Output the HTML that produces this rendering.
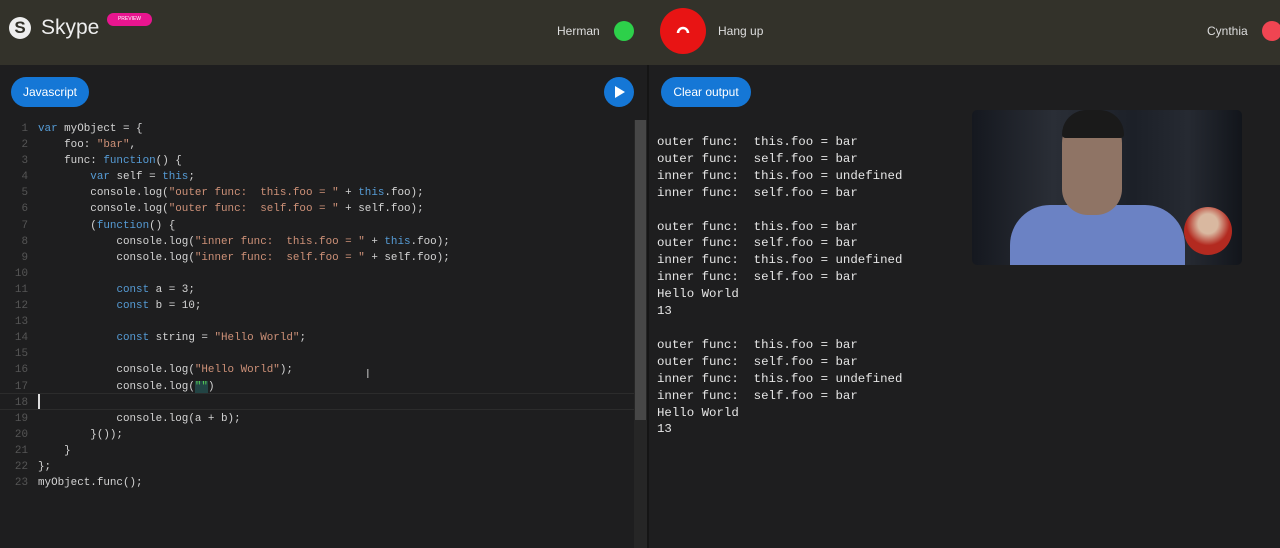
<!DOCTYPE html>
<html><head><style>
*{margin:0;padding:0;box-sizing:border-box}
body{width:1280px;height:548px;background:#1e1e1f;font-family:"Liberation Sans",sans-serif;position:relative;overflow:hidden;color:#ddd}
.hdr{position:absolute;left:0;top:0;width:1280px;height:65px;background:#33322a}
.abs{position:absolute}
.btn{position:absolute;background:#1577d6;color:#fff;border-radius:16px;font-size:12px;text-align:center;line-height:30px;height:30px}
.code{position:absolute;left:0;top:121px;font-family:"Liberation Mono",monospace;font-size:10.9px;line-height:16.1px;white-space:pre;color:#d4d4d4}
.ln{display:inline-block;width:38px;text-align:right;color:#555;padding-right:10px}
.k{color:#569cd6}.s{color:#ce9178}
.out{position:absolute;left:657px;top:134px;font-family:"Liberation Mono",monospace;font-size:12.4px;line-height:16.9px;white-space:pre;color:#e6e6e6}
</style></head><body>
<div class="hdr"></div>
<div class="abs" style="left:9px;top:17px;width:22px;height:22px;border-radius:50%;background:#eee;color:#33322a;font-weight:bold;font-size:17px;text-align:center;line-height:22px">S</div>
<div class="abs" style="left:41px;top:16px;font-size:21px;color:#eee">Skype</div>
<div class="abs" style="left:107px;top:13px;width:45px;height:13px;border-radius:7px;background:#e8158f;color:#fff;font-size:5px;text-align:center;line-height:13px">PREVIEW</div>
<div class="abs" style="left:557px;top:24px;font-size:12px;color:#ddd">Herman</div>
<div class="abs" style="left:614px;top:21px;width:20px;height:20px;border-radius:50%;background:#2dd04a"></div>
<div class="abs" style="left:660px;top:8px;width:46px;height:46px;border-radius:50%;background:#e81414"></div>
<svg class="abs" style="left:676px;top:24px" width="14" height="10"><path d="M2 9 A5 5 0 0 1 12 9" stroke="#fff" stroke-width="2.5" fill="none"/></svg>
<div class="abs" style="left:718px;top:24px;font-size:12px;color:#ddd">Hang up</div>
<div class="abs" style="left:1207px;top:24px;font-size:12px;color:#ddd">Cynthia</div>
<div class="abs" style="left:1262px;top:21px;width:20px;height:20px;border-radius:50%;background:#f04552"></div>

<div class="btn" style="left:11px;top:77px;width:78px">Javascript</div>
<div class="abs" style="left:604px;top:77px;width:30px;height:30px;border-radius:50%;background:#1577d6"></div>
<svg class="abs" style="left:613px;top:85px" width="14" height="14"><path d="M2 1 L12 7 L2 13Z" fill="#fff"/></svg>
<div class="btn" style="left:661px;top:77px;width:90px">Clear output</div>

<div class="abs" style="left:634px;top:120px;width:13px;height:428px;background:#262626"></div>
<div class="abs" style="left:635px;top:120px;width:11px;height:300px;background:#474747"></div>
<div class="abs" style="left:647px;top:65px;width:2px;height:483px;background:#151515"></div>
<div class="abs" style="left:0;top:393px;width:634px;height:17px;border-top:1px solid #2c2c2c;border-bottom:1px solid #2c2c2c"></div>
<div class="abs" style="left:38px;top:394px;width:2px;height:15px;background:#ddd"></div>

<div class="code"><span class="ln">1</span><span class="k">var</span> myObject = {
<span class="ln">2</span>    foo: <span class="s">"bar"</span>,
<span class="ln">3</span>    func: <span class="k">function</span>() {
<span class="ln">4</span>        <span class="k">var</span> self = <span class="k">this</span>;
<span class="ln">5</span>        console.log(<span class="s">"outer func:  this.foo = "</span> + <span class="k">this</span>.foo);
<span class="ln">6</span>        console.log(<span class="s">"outer func:  self.foo = "</span> + self.foo);
<span class="ln">7</span>        (<span class="k">function</span>() {
<span class="ln">8</span>            console.log(<span class="s">"inner func:  this.foo = "</span> + <span class="k">this</span>.foo);
<span class="ln">9</span>            console.log(<span class="s">"inner func:  self.foo = "</span> + self.foo);
<span class="ln">10</span>
<span class="ln">11</span>            <span class="k">const</span> a = 3;
<span class="ln">12</span>            <span class="k">const</span> b = 10;
<span class="ln">13</span>
<span class="ln">14</span>            <span class="k">const</span> string = <span class="s">"Hello World"</span>;
<span class="ln">15</span>
<span class="ln">16</span>            console.log(<span class="s">"Hello World"</span>);
<span class="ln">17</span>            console.log(<span style="color:#5c5;background:#244">""</span>)
<span class="ln">18</span>
<span class="ln">19</span>            console.log(a + b);
<span class="ln">20</span>        }());
<span class="ln">21</span>    }
<span class="ln">22</span>};
<span class="ln">23</span>myObject.func();</div>
<div class="abs" style="left:366px;top:366px;color:#aaa;font-size:13px">I</div>

<div class="out">outer func:  this.foo = bar
outer func:  self.foo = bar
inner func:  this.foo = undefined
inner func:  self.foo = bar

outer func:  this.foo = bar
outer func:  self.foo = bar
inner func:  this.foo = undefined
inner func:  self.foo = bar
Hello World
13

outer func:  this.foo = bar
outer func:  self.foo = bar
inner func:  this.foo = undefined
inner func:  self.foo = bar
Hello World
13</div>

<div class="abs" style="left:972px;top:110px;width:270px;height:155px;border-radius:5px;background:linear-gradient(90deg,#15181f,#2a2e36 30%,#1c2028 60%,#262a32 80%,#12151b);overflow:hidden">
  <div class="abs" style="left:38px;top:95px;width:175px;height:70px;border-radius:40px 40px 0 0;background:#6b82c4"></div>
  <div class="abs" style="left:90px;top:5px;width:60px;height:100px;border-radius:28px 28px 26px 26px;background:#8f7465"></div>
  <div class="abs" style="left:90px;top:0px;width:62px;height:28px;border-radius:28px 28px 4px 4px;background:#1a1a1a"></div>
  <div class="abs" style="left:212px;top:97px;width:48px;height:48px;border-radius:50%;background:radial-gradient(circle at 50% 35%,#d9b8a0 25%,#b32a20 55%)"></div>
</div>
</body></html>
